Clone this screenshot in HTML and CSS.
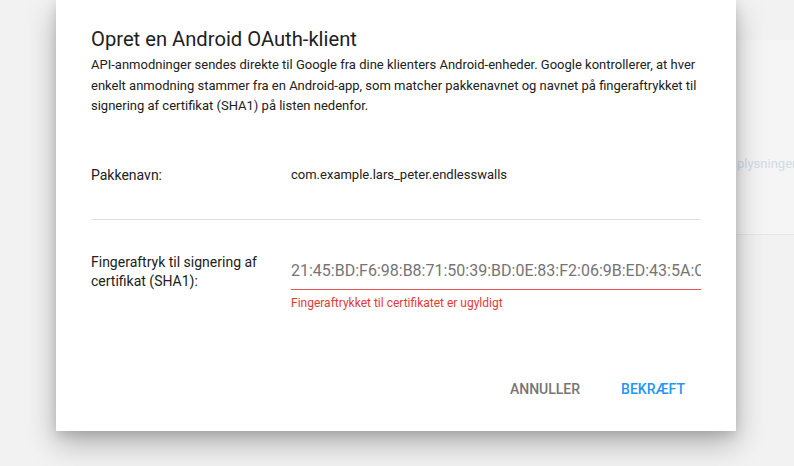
FILE: index.html
```html
<!DOCTYPE html>
<html lang="da">
<head>
<meta charset="utf-8">
<title>Opret en Android OAuth-klient</title>
<link rel="stylesheet" href="styles.css">
</head>
<body>
<div class="page">
  <div class="bg-card">
    <span class="bg-text">plysninger</span>
  </div>
</div>
<div class="dialog" role="dialog">
  <h1 class="title">Opret en Android OAuth-klient</h1>
  <p class="desc">API-anmodninger sendes direkte til Google fra dine klienters Android-enheder. Google kontrollerer, at hver enkelt anmodning stammer fra en Android-app, som matcher pakkenavnet og navnet på fingeraftrykket til signering af certifikat (SHA1) på listen nedenfor.</p>
  <div class="row row-pkg">
    <div class="label">Pakkenavn:</div>
    <div class="value">com.example.lars_peter.endlesswalls</div>
  </div>
  <div class="divider"></div>
  <div class="row row-sha">
    <div class="label">Fingeraftryk til signering af certifikat (SHA1):</div>
    <div class="field">
      <div class="input">21:45:BD:F6:98:B8:71:50:39:BD:0E:83:F2:06:9B:ED:43:5A:C6:1F</div>
      <div class="error">Fingeraftrykket til certifikatet er ugyldigt</div>
    </div>
  </div>
  <div class="actions">
    <button class="btn btn-cancel">Annuller</button>
    <button class="btn btn-ok">Bekræft</button>
  </div>
</div>
</body>
</html>
```
FILE: styles.css
```css
html, body {
  margin: 0;
  padding: 0;
}
body {
  width: 794px;
  height: 466px;
  overflow: hidden;
  background: #f2f2f2;
  font-family: Roboto, "Liberation Sans", sans-serif;
  position: relative;
}
.page {
  padding-top: 40px;
}
.bg-card {
  margin-left: 600px;
  height: 195px;
  background: #f5f5f5;
  border-bottom: 1px solid #e6e6e6;
  display: flex;
  align-items: center;
  padding-left: 137px;
  box-sizing: border-box;
}
.bg-text {
  color: #cfdcea;
  font-size: 13px;
  white-space: nowrap;
  margin-top: 52px;
}
.dialog {
  position: absolute;
  left: 56px;
  top: 0;
  width: 680px;
  height: 431px;
  box-sizing: border-box;
  background: #fff;
  padding: 25px 35px 0;
  box-shadow: 0 12px 28px rgba(0,0,0,0.28), 0 4px 10px rgba(0,0,0,0.12);
  color: #212121;
}
.title {
  margin: 0;
  font-size: 20.2px;
  line-height: 28px;
  font-weight: 400;
  color: #212121;
}
.desc {
  margin: 2px 0 0;
  font-size: 13px;
  line-height: 20.5px;
  color: #212121;
}
.row {
  display: flex;
  font-size: 14px;
}
.row-pkg {
  margin-top: 48px;
  line-height: 20px;
}
.label {
  width: 200px;
  flex: none;
  color: #212121;
}
.row-pkg .value {
  color: #212121;
  font-size: 13px;
}
.divider {
  height: 1px;
  background: #e0e0e0;
  margin-top: 34px;
}
.row-sha {
  margin-top: 33px;
  line-height: 19px;
}
.row-sha .label {
  width: 170px;
  margin-right: 30px;
}
.field {
  flex: 1;
  min-width: 0;
  padding-top: 6px;
}
.input {
  font-size: 16px;
  line-height: 24px;
  color: #757575;
  white-space: nowrap;
  overflow: hidden;
  padding-bottom: 6px;
  border-bottom: 1px solid #ef5350;
}
.error {
  margin-top: 5px;
  font-size: 12px;
  line-height: 16px;
  color: #e53935;
}
.actions {
  display: flex;
  justify-content: flex-end;
  gap: 9px;
  margin-top: 60px;
}
.btn {
  font-family: Roboto, "Liberation Sans", sans-serif;
  font-size: 14px;
  font-weight: 500;
  text-transform: uppercase;
  background: none;
  border: none;
  height: 36px;
  padding: 0 16px;
  cursor: pointer;
}
.btn-cancel {
  color: #757575;
}
.btn-ok {
  color: #2196f3;
}
```
